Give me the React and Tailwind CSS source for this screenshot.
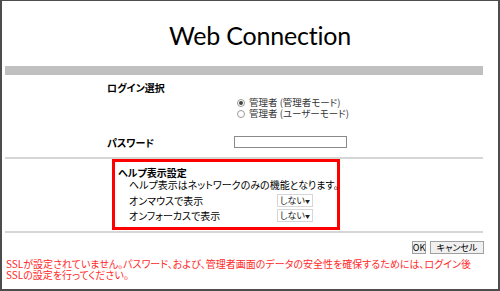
import React from 'react';

const jp = "font-['Noto_Sans_CJK_JP','Noto_Sans',sans-serif] [font-feature-settings:'palt']";

function Radio({ checked }) {
  return (
    <span className="w-[8px] h-[8px] rounded-full border border-[#9a9a9a] bg-white flex items-center justify-center mr-[4px]">
      {checked && <span className="w-[4px] h-[4px] rounded-full bg-[#444]" />}
    </span>
  );
}

function FakeSelect() {
  return (
    <div className="w-[36px] h-[13px] border border-[#d6d6d6] bg-white flex items-center justify-between pl-[2px] pr-[2px] text-[9px] leading-none text-[#222] whitespace-nowrap">
      <span>しない</span>
      <span className="text-[5px]">▼</span>
    </div>
  );
}

export default function App() {
  return (
    <div className={`w-[500px] h-[291px] bg-white border-[#4d4d4d] border-l-2 border-t border-r-2 border-b-2 overflow-hidden ${jp}`}>
      <div className="ml-[3px] w-[478px]">
        {/* title */}
        <div className="h-[65px] flex justify-center items-start pl-[32px] pt-[19px]">
          <h1 className="font-['Lato',sans-serif] text-[25px] leading-[30px] text-black tracking-[-0.2px]">Web Connection</h1>
        </div>
        <div className="h-[9px] bg-[#c0c0c0]" />

        {/* login form */}
        <div className="pl-[102px] text-[10px] text-black">
          <div className="mt-[7px] h-[12px] leading-[12px] font-bold">ログイン選択</div>
          <div className="mt-[3px] pl-[130px] text-[9.5px] leading-[11px] text-[#333]">
            <div className="flex items-center h-[11px]"><Radio checked />管理者 (管理者モード)</div>
            <div className="flex items-center h-[11px]"><Radio />管理者 (ユーザーモード)</div>
          </div>
          <div className="mt-[17px] flex items-center h-[12px]">
            <span className="w-[127px] font-bold">パスワード</span>
            <div className="w-[113px] h-[12px] border border-[#8a8a8a] bg-white" />
          </div>
        </div>
        <div className="mt-[9px] h-[2px] bg-[#d6d6d6]" />

        {/* help settings */}
        <div className="ml-[107px] w-[228px] h-[71px] border-[3px] border-[#ff0000] pt-[5px] pl-[3px] text-[10px] text-black whitespace-nowrap">
          <div className="h-[11px] leading-[11px] font-bold">ヘルプ表示設定</div>
          <div className="pl-[11px] leading-[11px] mt-[1px]">
            <div className="h-[11px]">ヘルプ表示はネットワークのみの機能となります。</div>
            <div className="mt-[4px] flex items-center h-[13px]">
              <span className="w-[148px]">オンマウスで表示</span>
              <FakeSelect />
            </div>
            <div className="mt-[2px] flex items-center h-[13px]">
              <span className="w-[148px]">オンフォーカスで表示</span>
              <FakeSelect />
            </div>
          </div>
        </div>
        <div className="mt-[1px] h-[2px] bg-[#d6d6d6]" />

        {/* buttons */}
        <div className="mt-[8px] flex justify-end gap-[4px] -mr-[1px]">
          <button className="w-[14px] h-[13px] border border-[#a0a0a0] bg-[#f0f0f0] text-[9px] leading-none text-black flex items-center justify-center">OK</button>
          <button className="w-[54px] h-[13px] border border-[#a0a0a0] bg-[#f0f0f0] text-[9px] leading-none text-black flex items-center justify-center">キャンセル</button>
        </div>

        {/* warning */}
        <p className="mt-[4px] pl-[1px] text-[10px] leading-[11px] text-[#ff2a2a]">
          SSLが設定されていません。パスワード、および、管理者画面のデータの安全性を確保するためには、ログイン後<br />
          SSLの設定を行ってください。
        </p>
      </div>
    </div>
  );
}
